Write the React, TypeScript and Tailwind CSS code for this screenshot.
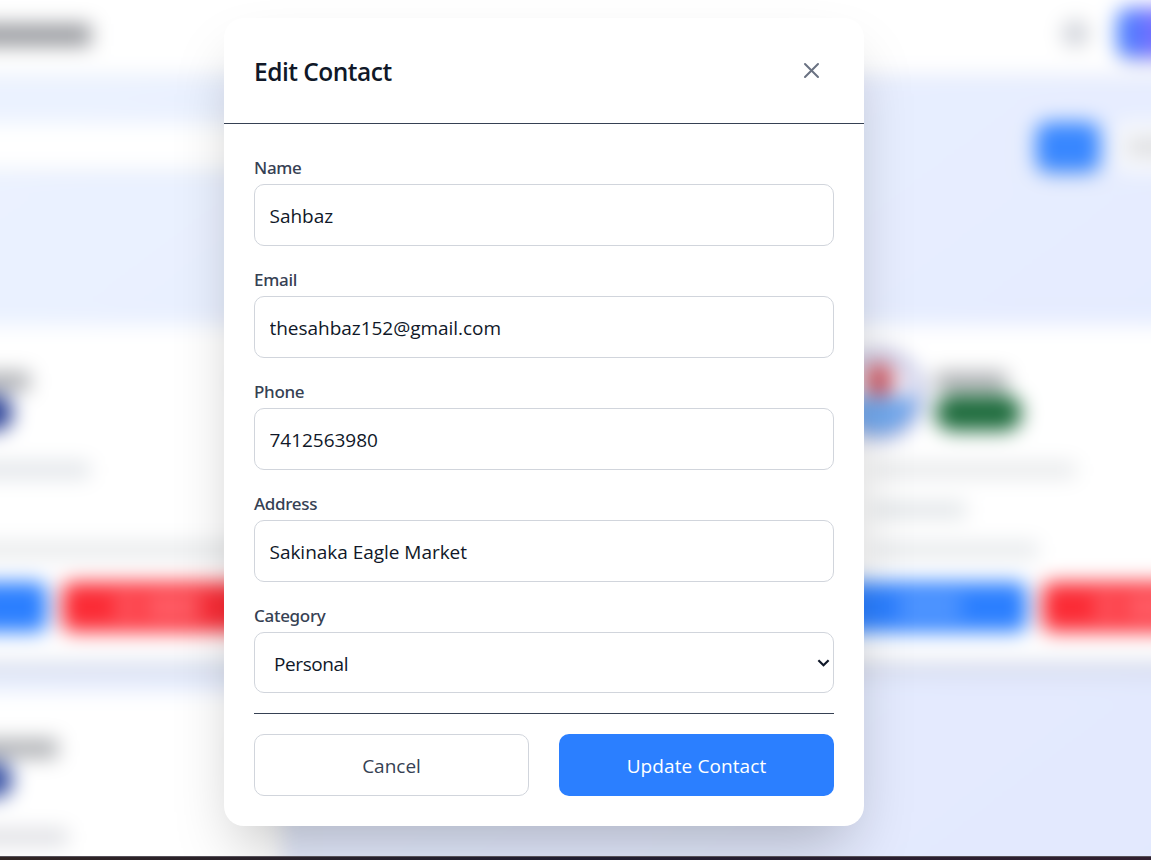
import React from "react";

type Line = { width: string; tone: string };

const lines: Line[] = [
  { width: "w-[204px]", tone: "bg-[#e7e9eb]" },
  { width: "w-[94px]", tone: "bg-[#e0e4e7]" },
  { width: "w-[166px]", tone: "bg-[#e5e8eb]" },
];

const leftLines: Line[] = [
  { width: "w-[198px]", tone: "bg-[#e0e4e8]" },
  { width: "w-[88px]", tone: "bg-[#e2e5e8]" },
  { width: "w-[356px]", tone: "bg-[#e7e9eb]" },
];

const lowerLines: Line[] = [
  { width: "w-[176px]", tone: "bg-[#dcdde2]" },
  { width: "w-[88px]", tone: "bg-[#e2e5e8]" },
  { width: "w-[200px]", tone: "bg-[#e7e9eb]" },
];

function ContactCard({
  pill,
  pillWidth = "w-[87px]",
  nameWidth,
  details,
}: {
  pill: string;
  pillWidth?: string;
  nameWidth: string;
  details: Line[];
}) {
  return (
    <article className="flex h-[337px] w-[460px] shrink-0 flex-col rounded-[20px] bg-white px-[30px] pt-5 shadow-[0_12px_19px_-4px_rgba(0,0,0,0.1),0_5px_8px_-5px_rgba(0,0,0,0.1)]">
      <div className="flex h-[100px] items-center gap-[11px]">
        <div className="flex size-[90px] shrink-0 flex-col items-center overflow-hidden rounded-full border-[7px] border-[#a3a9d8] bg-[#f4f1fa]">
          <div className="mt-1.5 h-[34px] w-[28px] shrink-0 rounded-full bg-[#cc5560]" />
          <div className="h-[40px] w-full bg-[#6ea8ee]" />
        </div>
        <div className="flex grow flex-col gap-1 pt-3">
          <div className={"h-[19px] rounded bg-[#acaeb2] " + nameWidth} />
          <div className={"h-[36px] rounded-full " + pill + " " + pillWidth} />
        </div>
        <div className="mb-7 h-6 w-4 rounded-full bg-[#e1e6e9]" />
      </div>
      <div className="mt-[17px] flex flex-col gap-[24px] pl-[38px]">
        {details.map((d, i) => (
          <div key={i} className={"h-4 rounded " + d.width + " " + d.tone} />
        ))}
      </div>
      <div className="mt-[24px] grid grid-cols-2 gap-[15px]">
        <div className="flex h-[50px] items-center justify-center rounded-[10px] bg-[#2b7fff]">
          <div className="h-5 w-[62px] rounded bg-[#5a9bff]" />
        </div>
        <div className="flex h-[50px] items-center justify-center gap-2 rounded-[10px] bg-[#fb2c36]">
          <div className="h-5 w-5 rounded bg-[#ff656d]" />
          <div className="h-5 w-[56px] rounded bg-[#ff6b73]" />
        </div>
      </div>
    </article>
  );
}

function Dashboard() {
  return (
    <div className="-mx-10 -mt-10 flex h-[936px] flex-col overflow-hidden bg-linear-to-br from-[#ecf3ff] to-[#e2e8fe] blur-[10px]">
      <header className="flex h-[115px] shrink-0 items-center justify-between bg-white pt-[31px] shadow-[0_1px_4px_rgba(0,0,0,0.08)]">
        <div className="mt-1 h-[22px] w-[131px] bg-[#96989d]" />
        <div className="flex items-center gap-[28px]">
          <div className="size-[27px] rounded-full bg-[#d0d3da]" />
          <div className="h-[50px] w-[74px] rounded-l-[12px] bg-linear-to-r from-[#347fff] to-[#9a5cff] shadow-md" />
        </div>
      </header>
      <div className="mt-[47px] flex h-[50px] shrink-0 items-center justify-between">
        <div className="h-[48px] w-[640px] bg-white shadow-sm" />
        <div className="flex gap-[15px]">
          <div className="h-[50px] w-[64px] rounded-[12px] bg-[#3887ff] shadow-md" />
          <div className="flex h-[50px] w-[76px] items-center justify-end rounded-l-[12px] bg-[#fafbfd]">
            <div className="h-5 w-[64px] bg-[#dedfe2]" />
          </div>
        </div>
      </div>
      <main className="-ml-[136px] mt-[153px] grid shrink-0 grid-cols-[460px_460px_460px] gap-[30px]">
        <ContactCard pill="bg-[#283f96]" pillWidth="w-[58px]" nameWidth="w-[75px]" details={leftLines} />
        <ContactCard pill="bg-[#283f96]" nameWidth="w-[99px]" details={lines} />
        <ContactCard pill="bg-[#1d6b3c]" nameWidth="w-[72px]" details={lines} />
        <ContactCard
          pill="bg-[#3650a4]"
          pillWidth="w-[58px]"
          nameWidth="w-[103px]"
          details={lowerLines}
        />
      </main>
    </div>
  );
}

const labelClass =
  "block h-[25px] font-['Noto_Sans','Open_Sans',sans-serif] text-[17px] leading-[27px] font-medium tracking-[-0.3px] text-[#364153]";
const controlClass =
  "w-full rounded-[10px] border border-[#d1d5dc] bg-white text-[19px] text-[#101828] outline-none";

function Field({ label, value, type = "text" }: { label: string; value: string; type?: string }) {
  return (
    <label className="flex flex-col gap-[5px]">
      <span className={labelClass}>{label}</span>
      <input
        type={type}
        defaultValue={value}
        className={controlClass + " h-[62px] pl-[14.5px] pr-[15px] pt-[2px] tracking-[-0.03px]"}
      />
    </label>
  );
}

export default function App() {
  return (
    <div className="flex h-[860px] w-full flex-col overflow-hidden font-['Open_Sans','Noto_Sans',sans-serif]">
      <div className="relative h-[856px] shrink-0 overflow-hidden">
        <Dashboard />
        <div className="absolute inset-0 flex justify-center pr-[63px] pt-[18px]">
          <section className="h-[808px] w-[640px] rounded-[20px] bg-white shadow-[0_31px_62px_-15px_rgba(0,0,0,0.25)]">
            <div className="flex h-[106px] items-start justify-between border-b border-[#364153] p-[30px]">
              <h2 className="text-[24.5px] leading-[48px] font-semibold tracking-[-0.5px] text-[#101828]">
                Edit Contact
              </h2>
              <button aria-label="Close" className="flex size-[45px] items-center justify-center">
                <svg
                  className="size-[25px] text-[#6a7282]"
                  viewBox="0 0 25 25"
                  fill="none"
                  stroke="currentColor"
                  strokeWidth="2"
                  strokeLinecap="round"
                >
                  <path d="M6 6l13 13M19 6L6 19" />
                </svg>
              </button>
            </div>
            <form className="flex flex-col gap-5 p-[30px]" onSubmit={(e) => e.preventDefault()}>
              <Field label="Name" value="Sahbaz" />
              <Field label="Email" value="thesahbaz152@gmail.com" />
              <Field label="Phone" value="7412563980" />
              <Field label="Address" value="Sakinaka Eagle Market" />
              <label className="flex flex-col gap-[5px]">
                <span className={labelClass}>Category</span>
                <span className="grid items-center">
                  <select
                    defaultValue="Personal"
                    className={
                      controlClass +
                      " col-start-1 row-start-1 h-[61px] appearance-none pl-[19px] pr-8 pt-[4px] tracking-[-0.4px]"
                    }
                  >
                    <option>Personal</option>
                  </select>
                  <svg
                    className="pointer-events-none col-start-1 row-start-1 mr-[4.5px] h-[8px] w-[13px] justify-self-end text-[#101828]"
                    viewBox="0 0 13 8"
                    fill="none"
                    stroke="currentColor"
                    strokeWidth="2.2"
                  >
                    <path d="M1.4 1.2L6.5 6.2L11.6 1.2" />
                  </svg>
                </span>
              </label>
              <div className="grid grid-cols-2 gap-[30px] border-t border-[#364153] pt-5">
                <button
                  type="button"
                  className="h-[62px] rounded-[10px] border border-[#d1d5dc] pt-[2px] text-[19px] text-[#364153]"
                >
                  Cancel
                </button>
                <button
                  type="submit"
                  className="h-[62px] rounded-[10px] bg-[#2b7fff] pt-[2px] text-[19px] tracking-[0.1px] text-white"
                >
                  Update Contact
                </button>
              </div>
            </form>
          </section>
        </div>
      </div>
      <div className="h-1 shrink-0 border-t border-[#57525a] bg-linear-to-r from-[#302424] via-[#201d30] to-[#301f2f]" />
    </div>
  );
}
